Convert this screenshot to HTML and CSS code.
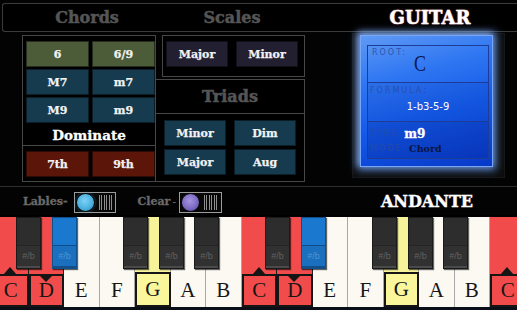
FILE: index.html
```html
<!DOCTYPE html>
<html>
<head>
<meta charset="utf-8">
<link rel="stylesheet" href="styles.css">
</head>
<body>
<div class="app">
  <header class="topbar">
    <span class="title">Chords</span>
    <span class="title">Scales</span>
    <span></span>
    <span class="brand">GUITAR</span>
  </header>

  <section class="main">
    <div class="panel chords">
      <div class="grid cgrid">
        <div class="btn olive">6</div>
        <div class="btn olive">6/9</div>
        <div class="btn teal">M7</div>
        <div class="btn teal">m7</div>
        <div class="btn teal">M9</div>
        <div class="btn teal">m9</div>
      </div>
      <div class="dom-title">Dominate</div>
      <div class="dom">
        <div class="grid cgrid">
          <div class="btn red">7th</div>
          <div class="btn red">9th</div>
        </div>
      </div>
    </div>

    <div class="midcol">
      <div class="panel scales">
        <div class="btn purple">Major</div>
        <div class="btn purple">Minor</div>
      </div>
      <div class="panel triads">
        <div class="ptitle">Triads</div>
        <div class="grid tgrid">
          <div class="btn teal">Minor</div>
          <div class="btn teal">Dim</div>
          <div class="btn teal">Major</div>
          <div class="btn teal">Aug</div>
        </div>
      </div>
    </div>

    <div class="frame">
      <div class="display">
        <div class="info">
          <div class="sec root">
            <span class="lbl">ROOT:</span>
            <span class="rootval">C</span>
          </div>
          <div class="sec formula">
            <span class="lbl">FORMULA:</span>
            <span class="fval">1-b3-5-9</span>
          </div>
          <div class="sec typesec">
            <div class="trow"><span class="lbl">TYPE:</span><span class="tval">m9</span></div>
            <div class="trow"><span class="lbl">MODE:</span><span class="mval">Chord</span></div>
          </div>
        </div>
      </div>
    </div>
  </section>

  <div class="sep"></div>

  <div class="controls">
    <span class="clabel lables">Lables-</span>
    <div class="toggle"><span class="knob cyan"></span><span class="stripes"></span></div>
    <span class="clabel clear">Clear</span>
    <span class="dash">-</span>
    <div class="toggle t2"><span class="knob violet"></span><span class="stripes"></span></div>
    <span class="tempo">ANDANTE</span>
  </div>

  <div class="keyboard">
    <div class="whites">
      <div class="wkey red"><div class="upper"></div><div class="lab up">C</div></div>
      <div class="wkey red"><div class="upper"></div><div class="lab down">D</div></div>
      <div class="wkey"><div class="upper"></div><div class="lab">E</div></div>
      <div class="wkey"><div class="upper"></div><div class="lab">F</div></div>
      <div class="wkey yel"><div class="upper"></div><div class="lab">G</div></div>
      <div class="wkey"><div class="upper"></div><div class="lab">A</div></div>
      <div class="wkey"><div class="upper"></div><div class="lab">B</div></div>
      <div class="wkey red"><div class="upper"></div><div class="lab up">C</div></div>
      <div class="wkey red"><div class="upper"></div><div class="lab down">D</div></div>
      <div class="wkey"><div class="upper"></div><div class="lab">E</div></div>
      <div class="wkey"><div class="upper"></div><div class="lab">F</div></div>
      <div class="wkey yel"><div class="upper"></div><div class="lab">G</div></div>
      <div class="wkey"><div class="upper"></div><div class="lab">A</div></div>
      <div class="wkey"><div class="upper"></div><div class="lab">B</div></div>
      <div class="wkey red"><div class="upper"></div><div class="lab up">C</div></div>
    </div>
    <div class="bkey b1"><div class="btop"></div><div class="bbot">#/b</div></div>
    <div class="bkey blue b2"><div class="btop"></div><div class="bbot">#/b</div></div>
    <div class="bkey b3"><div class="btop"></div><div class="bbot">#/b</div></div>
    <div class="bkey b4"><div class="btop"></div><div class="bbot">#/b</div></div>
    <div class="bkey b5"><div class="btop"></div><div class="bbot">#/b</div></div>
    <div class="bkey b6"><div class="btop"></div><div class="bbot">#/b</div></div>
    <div class="bkey blue b7"><div class="btop"></div><div class="bbot">#/b</div></div>
    <div class="bkey b8"><div class="btop"></div><div class="bbot">#/b</div></div>
    <div class="bkey b9"><div class="btop"></div><div class="bbot">#/b</div></div>
    <div class="bkey b10"><div class="btop"></div><div class="bbot">#/b</div></div>
  </div>
</div>
</body>
</html>
```

FILE: styles.css
```css
* { box-sizing: border-box; margin: 0; padding: 0; }
html, body { width: 517px; height: 310px; overflow: hidden; background: #000; }
body { font-family: "DejaVu Serif", serif; color: #eee; }

.app { width: 517px; height: 310px; display: flex; flex-direction: column; background: #030303; }

/* top bar */
.topbar {
  margin: 3px 0 0 2px;
  height: 29px;
  border: 1px solid #3b3b3b;
  border-right: none;
  border-radius: 3px 0 0 3px;
  display: grid;
  grid-template-columns: 168px 122px 52px 170px;
  align-items: center;
  background: #000;
}
.title {
  text-align: center; font-weight: bold; font-size: 16px; color: #555;
  -webkit-text-stroke: 0.5px #555;
}
.brand {
  text-align: center; font-weight: bold; font-size: 18px; color: #fff;
  -webkit-text-stroke: 0.4px #fff;
  text-shadow: 0 0 1px #d86868, 0 0 2px rgba(220,100,100,0.7);
}

/* main */
.main { margin-top: 3px; height: 147px; display: flex; }
.panel { border: 1px solid #474747; background: #000; }
.chords { margin-left: 22px; width: 134px; height: 147px; }
.grid { display: grid; }
.cgrid { margin: 5px 0 0 3px; grid-template-columns: 63px 63px; grid-auto-rows: 26px; gap: 2px 3px; }
.dom-title {
  height: 22px; padding-top: 2px; text-align: center; font-weight: bold; font-size: 13.5px;
  line-height: 20px; color: #fff; -webkit-text-stroke: 0.3px #fff;
}
.dom { border-top: 1px solid #474747; }

.btn {
  display: flex; align-items: center; justify-content: center;
  font-weight: bold; font-size: 11px; color: #f2f2f2;
  -webkit-text-stroke: 0.25px #f2f2f2;
  border: 1px solid rgba(0,0,0,0.5);
}
.olive { background: #4c5b38; }
.teal { background: #163a4e; }
.red { background: #5b1609; }
.purple { background: #221f31; }

.midcol { margin-left: -1px; width: 150px; display: flex; flex-direction: column; }
.scales { margin-left: 7px; width: 143px; height: 42px; padding: 5px 0 0 3px; display: flex; gap: 8px; }
.scales .btn { width: 62px; height: 26px; }
.triads { margin-top: 2px; width: 150px; height: 103px; }
.ptitle {
  height: 34px; border-bottom: 1px solid #474747; text-align: center; font-weight: bold;
  font-size: 16px; line-height: 34px; color: #555; -webkit-text-stroke: 0.5px #555;
}
.tgrid { margin: 6px 0 0 8px; grid-template-columns: 62px 62px; grid-auto-rows: 26px; gap: 3px 8px; }

/* display */
.frame {
  margin: -2px 0 0 47px; width: 153px; height: 145px;
  background: #0c0c0c; border: 1px solid #161616;
}
.display {
  margin: 1px 0 0 7px; width: 133px; height: 132px;
  border: 1px solid #7aa6f5;
  background: linear-gradient(165deg, #5f9af4 0%, #2f76f2 30%, #1459e8 60%, #0738c8 100%);
  box-shadow: 0 0 8px 3px rgba(110,165,255,0.8), -2px -2px 6px rgba(210,225,255,0.55);
}
.info {
  margin: 9px 0 0 6px; width: 122px; height: 114px;
  border: 1px solid #1b3d98;
  display: flex; flex-direction: column;
}
.sec { border-bottom: 1px solid #1b3d98; display: flex; flex-direction: column; }
.sec:last-child { border-bottom: none; }
.root { height: 37px; padding: 2px 0 0 4px; }
.formula { height: 39px; padding: 3px 0 0 2px; background: rgba(0,20,120,0.08); }
.typesec { flex: 1; padding: 4px 0 0 2px; background: rgba(0,20,110,0.18); }
.lbl { font-family: "DejaVu Sans", sans-serif; font-size: 8px; letter-spacing: 2px; line-height: 10px; color: rgba(40,75,160,0.85); }
.rootval {
  margin: -5px 0 0 42px; width: 12px;
  font-family: "Liberation Serif", serif; font-size: 23px; line-height: 22px;
  color: #0b1850; transform: scaleX(0.78); transform-origin: left center;
}
.fval { margin-top: 4px; text-align: center; font-family: "DejaVu Sans", sans-serif; font-size: 10px; line-height: 14px; color: #ffffff; padding-right: 2px; }
.trow { height: 15px; display: flex; align-items: center; }
.tval { margin-left: 2px; font-weight: bold; font-size: 12px; color: #fff; -webkit-text-stroke: 0.3px #fff; }
.mval { margin-left: 2px; font-weight: bold; font-size: 9.5px; color: #0a1440; }

/* separator + controls */
.sep { margin-top: 4px; height: 1px; background: #2e2e2e; }
.controls { height: 28px; display: flex; align-items: center; }
.clabel { font-weight: bold; font-size: 11px; color: #6a6a6a; -webkit-text-stroke: 0.3px #6a6a6a; }
.lables { margin-left: 23px; }
.clear { margin-left: 22px; }
.dash { margin-left: 2px; color: #6a6a6a; font-size: 11px; font-family: "DejaVu Sans", sans-serif; }
.toggle {
  margin: 3px 0 0 6px; width: 42px; height: 21px;
  border: 1px solid #9c9c9c; background: #070707;
  display: flex; align-items: center; padding-left: 1px;
}
.t2 { margin-left: 3px; width: 43px; }
.knob { width: 19px; height: 19px; border-radius: 50%; border: 1px solid #0b0b0b; }
.cyan { background: radial-gradient(circle at 45% 40%, #7cd2f4 0%, #4bb2e0 55%, #2480b0 100%); box-shadow: 0 0 3px rgba(80,180,230,0.5); }
.violet { background: radial-gradient(circle at 45% 40%, #a596e0 0%, #7e6ac4 55%, #4b3b8a 100%); }
.stripes {
  margin-left: 4px; width: 13px; height: 15px;
  background: repeating-linear-gradient(90deg, #8e8e8e 0 1px, transparent 1px 2.4px);
}
.tempo { margin-left: auto; margin-right: 44px; font-weight: bold; font-size: 16px; color: #fff; -webkit-text-stroke: 0.4px #fff; }

/* keyboard */
.keyboard { position: relative; height: 95px; background: #000; overflow: hidden; border-bottom: 3px solid #0a0e16; }
.whites { display: flex; margin-left: -7px; padding-top: 2px; height: 92px; }
.wkey {
  flex: 0 0 35.5px; height: 90px; display: flex; flex-direction: column;
  background: #fbf9f2; border-right: 1px solid #a8a8a8;
}
.upper { flex: 1; }
.lab {
  position: relative;
  height: 33px;
  display: flex; align-items: center; justify-content: center;
  font-family: "Liberation Serif", serif; font-size: 21px; color: #161616;
}
.wkey.red { background: #f24b4b; border-right-color: #222; }
.wkey.red .lab { border: 2px solid #151515; margin-right: -1px; }
.wkey.yel .upper { background: #f7f39b; }
.wkey.yel .lab { background: #faf69b; border: 2px solid #151515; margin: -2px -1px 0 0; height: 35px; }
.lab.up::before {
  content: ""; position: absolute; left: 8px; top: -9px;
  border-left: 7px solid transparent; border-right: 7px solid transparent;
  border-bottom: 8px solid #151515;
}
.lab.down::before {
  content: ""; position: absolute; left: 9px; top: 0;
  border-left: 6px solid transparent; border-right: 6px solid transparent;
  border-top: 6px solid #151515;
}

.bkey {
  position: absolute; top: 2px; width: 25px; height: 52px;
  display: flex; flex-direction: column;
  background: #2d2d2d; border: 1px solid #1a1a1a;
  box-shadow: 1px 1px 1px rgba(0,0,0,0.6);
}
.btop { height: 27px; }
.bbot {
  flex: 1; border-top: 1px solid #242424; border-bottom: 2px solid #4a4a4a;
  background: #313131;
  display: flex; align-items: center; justify-content: center;
  font-family: "Liberation Sans", sans-serif; font-size: 9px; color: #616161;
}
.bkey.blue { background: #1a79cf; border-color: #0f4f8c; }
.bkey.blue .bbot { background: #1a6fbe; border-top-color: #0d4c88; border-bottom-color: #124f88; color: #4f94d2; }
.b1 { left: 16px; }
.b2 { left: 52px; }
.b3 { left: 123px; }
.b4 { left: 159px; }
.b5 { left: 194px; }
.b6 { left: 265px; }
.b7 { left: 301px; }
.b8 { left: 372px; }
.b9 { left: 408px; }
.b10 { left: 443px; }
```
